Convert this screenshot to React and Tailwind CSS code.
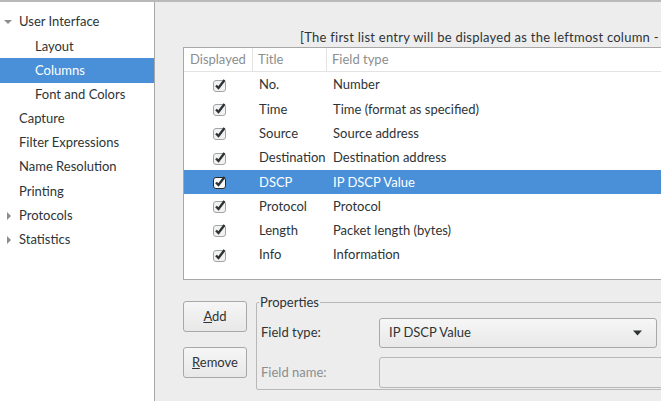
import React from "react";

const font = { fontFamily: "Lato, 'Noto Sans', sans-serif" };

const tree = [
  { label: "User Interface", depth: 0, arrow: "down" },
  { label: "Layout", depth: 1 },
  { label: "Columns", depth: 1, selected: true },
  { label: "Font and Colors", depth: 1 },
  { label: "Capture", depth: 0 },
  { label: "Filter Expressions", depth: 0 },
  { label: "Name Resolution", depth: 0 },
  { label: "Printing", depth: 0 },
  { label: "Protocols", depth: 0, arrow: "right" },
  { label: "Statistics", depth: 0, arrow: "right" },
];

const columns = [
  ["No.", "Number"],
  ["Time", "Time (format as specified)"],
  ["Source", "Source address"],
  ["Destination", "Destination address"],
  ["DSCP", "IP DSCP Value"],
  ["Protocol", "Protocol"],
  ["Length", "Packet length (bytes)"],
  ["Info", "Information"],
];

function Arrow({ dir }) {
  if (dir === "down") {
    return (
      <svg width="8" height="8" viewBox="0 0 8 8" className="absolute left-[4px]">
        <path d="M0 2 L8 2 L4 6 Z" fill="#8b8e8f" />
      </svg>
    );
  }
  return (
    <svg width="8" height="8" viewBox="0 0 8 8" className="absolute left-[5px]">
      <path d="M2 0 L6 4 L2 8 Z" fill="#8b8e8f" />
    </svg>
  );
}

function Check({ selected }) {
  return (
    <svg width="15" height="15" viewBox="0 0 15 15">
      <rect
        x="1.5"
        y="2.5"
        width="12"
        height="11"
        rx="2.5"
        fill={selected ? "#fafafa" : "#f2f2f2"}
        stroke={selected ? "#2b2b2b" : "#a3a3a3"}
      />
      <path d="M4 7.5 L6.5 10 L12.5 2" fill="none" stroke="#2e3436" strokeWidth="2.4" />
    </svg>
  );
}

export default function App() {
  return (
    <div
      className="w-[661px] h-[401px] overflow-hidden flex bg-[#ededed] text-[13px] text-[#2e3436] border-t-2 border-[#b9b9b9]"
      style={font}
    >
      {/* Sidebar tree */}
      <div className="w-[155px] shrink-0 bg-white border-r border-[#a8a8a8] pt-[8px]">
        {tree.map((item) => (
          <div
            key={item.label}
            className={`relative h-[24.2px] flex items-center whitespace-nowrap ${
              item.selected ? "bg-[#4a90d9] text-white" : ""
            } ${item.depth ? "pl-[35px]" : "pl-[19px]"}`}
          >
            {item.arrow && <Arrow dir={item.arrow} />}
            {item.label}
          </div>
        ))}
      </div>

      {/* Main panel */}
      <div className="flex-1 min-w-0 pl-[28px] pt-[26px]">
        <div className="h-[19px] pl-[117px] whitespace-nowrap leading-[19px] tracking-[0.25px]">
          [The first list entry will be displayed as the leftmost column -
        </div>

        {/* Columns table */}
        <div className="w-[520px] h-[233px] border border-[#a8a8a8] bg-white">
          <div className="flex h-[24px] border-b border-[#e3e3e3] text-[#8b8e8f]">
            <div className="w-[69px] pl-[6px] flex items-center border-r border-[#e3e3e3]">Displayed</div>
            <div className="w-[74px] pl-[5px] flex items-center border-r border-[#e3e3e3]">Title</div>
            <div className="flex-1 pl-[5px] flex items-center">Field type</div>
          </div>
          <div className="pt-[1px]">
            {columns.map(([title, type]) => {
              const selected = title === "DSCP";
              return (
                <div
                  key={title}
                  className={`flex h-[24.3px] items-center whitespace-nowrap ${
                    selected ? "bg-[#4a90d9] text-white" : ""
                  }`}
                >
                  <div className="w-[69px] flex justify-center pl-[1px]">
                    <Check selected={selected} />
                  </div>
                  <div className="w-[74px] pl-[6px]">{title}</div>
                  <div className="flex-1 pl-[6px]">{type}</div>
                </div>
              );
            })}
          </div>
        </div>

        {/* Bottom controls */}
        <div className="flex mt-[14px]">
          <div className="flex flex-col gap-[15px] pt-[7px] w-[73px] shrink-0">
            <button className="w-[64px] h-[31px] rounded-[3px] border border-[#a8a8a8] bg-gradient-to-b from-[#f6f6f6] to-[#e8e8e8]">
              <span className="underline">A</span>dd
            </button>
            <button className="w-[64px] h-[31px] rounded-[3px] border border-[#a8a8a8] bg-gradient-to-b from-[#f6f6f6] to-[#e8e8e8]">
              <span className="underline">R</span>emove
            </button>
          </div>

          <fieldset className="w-[440px] h-[96px] border border-[#b8b8b8] rounded-[2px] pl-[4px] pr-0 pt-[2px] shrink-0">
            <legend className="ml-[-2px] px-[1px] leading-[16px]">Properties</legend>
            <div className="flex items-center h-[30px] mt-[6px]">
              <div className="w-[118px] shrink-0">Field type:</div>
              <div className="w-[278px] h-[30px] rounded-[3px] border border-[#a8a8a8] bg-gradient-to-b from-[#f6f6f6] to-[#e8e8e8] flex items-center pl-[9px] pr-[14px]">
                <span className="flex-1">IP DSCP Value</span>
                <svg width="9" height="6" viewBox="0 0 9 6">
                  <path d="M0 0.5 L9 0.5 L4.5 5.5 Z" fill="#2e3436" />
                </svg>
              </div>
            </div>
            <div className="flex items-center h-[31px] mt-[9px]">
              <div className="w-[118px] shrink-0 text-[#8b8e8f]">Field name:</div>
              <div className="w-[320px] h-[31px] rounded-[3px] border border-[#b8b8b8] bg-[#ededed]" />
            </div>
          </fieldset>
        </div>
      </div>
    </div>
  );
}
